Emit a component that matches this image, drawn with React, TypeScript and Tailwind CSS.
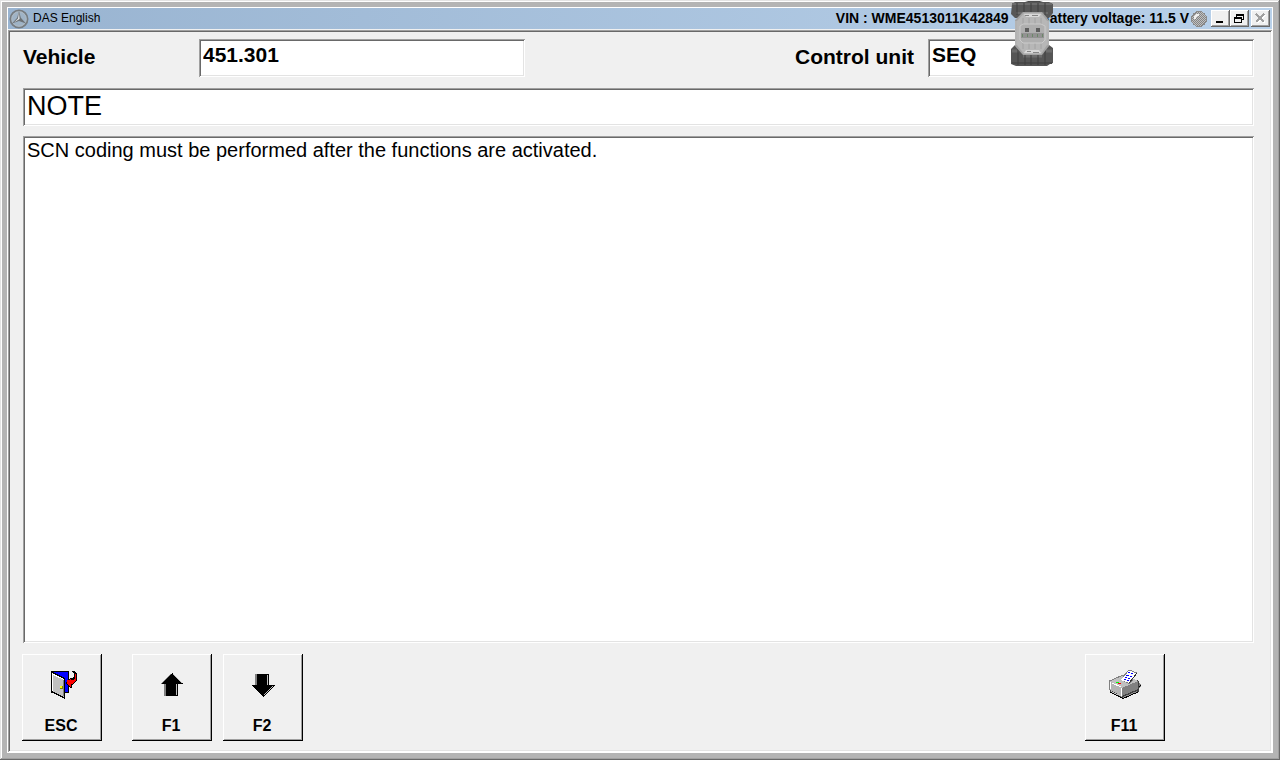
import type { ReactNode } from "react";

const SUNKEN =
  "bg-white shadow-[inset_1px_1px_0_#a0a0a0,inset_-1px_-1px_0_#fff,inset_2px_2px_0_#696969,inset_-2px_-2px_0_#e3e3e3]";
const FIELD = `${SUNKEN} h-[38px] min-w-0 px-1 text-black outline-none`;

function StarIcon() {
  return (
    <svg width="20" height="20" viewBox="0 0 20 20" aria-hidden="true">
      <circle cx="10" cy="10" r="8.6" fill="#9fb3c6" stroke="#777c80" strokeWidth="1.8" />
      <circle cx="10" cy="10" r="7.2" fill="none" stroke="#b4bbc1" strokeWidth="0.8" />
      <path d="M10 2 L11.8 8.8 L17 14.5 L10 12 L3 14.5 L8.2 8.8 Z" fill="#6c7175" />
      <path d="M10 3 L10.6 10 L5 13.4 L9 9.4 Z" fill="#e0e3e5" />
    </svg>
  );
}

function StatusBall() {
  return (
    <svg width="16" height="16" viewBox="0 0 16 16" shapeRendering="crispEdges" aria-hidden="true">
      <defs>
        <pattern id="dither" width="2" height="2" patternUnits="userSpaceOnUse">
          <rect width="2" height="2" fill="#c0c0c0" />
          <rect width="1" height="1" fill="#848484" />
          <rect x="1" y="1" width="1" height="1" fill="#848484" />
        </pattern>
      </defs>
      <circle cx="8" cy="8" r="7.5" fill="url(#dither)" stroke="#8a8a8a" strokeWidth="1" />
      <path d="M3 8 V5 L5 3 H8 V5 H6 V6 H5 V8 Z" fill="#f0f0f0" />
    </svg>
  );
}

function Interface() {
  return (
    <svg width="42" height="66" viewBox="0 0 42 66" aria-hidden="true">
      <path d="M1 4 L4 2 H14 L17 1 H29 L32 2 H38 L42 4 V13 L38 18 H4 L0 14 Z" fill="#575757" />
      <path d="M1 4 H41 M5 13 H37" stroke="#6b6b6b" strokeWidth="2" />
      <path d="M17 1.5 H29" stroke="#4a4a4a" />
      <path d="M6 3 V15 M13 3 V13 M20 3 V12 M27 3 V12 M34 3 V15" stroke="#3f3f3f" />
      <path d="M0 49 L4 45 H38 L42 48 V63 L39 64 L36 66 H5 L0 64 Z" fill="#565656" />
      <path d="M1 51 H8 M35 51 H41 M12 56 H31" stroke="#6c6c6c" strokeWidth="3" />
      <path d="M1 63 H41" stroke="#4a4a4a" strokeWidth="2" />
      <path d="M7 49 V65 M14 55 V65 M20 55 V65 M27 55 V65 M34 50 V65" stroke="#3e3e3e" />
      <path d="M12 12 H31 L38 20 V46 L31 55 H12 L4 46 V20 Z" fill="#a3a3a3" />
      <path d="M13 13 H30 L36 21 V45 L30 54 H13 L6 45 V21 Z" fill="#b7b7b7" />
      <path d="M5 21 V45 M37 21 V45" stroke="#c4c4c4" />
      <path d="M13 14 H30 L28 17 H15 Z M15 50 H28 L30 53 H13 Z" fill="#d8d8d8" />
      <path d="M14 15.5 H18 M21 15.5 H27 M16 51.5 H20 M22 52.5 H28" stroke="#858585" />
      <path d="M12 18 V25 M18 18 V25 M24 18 V25 M30 18 V25 M12 43 V49 M18 43 V49 M24 43 V49 M30 43 V49" stroke="#a2a2a2" />
      <path d="M9 26 L12 24 H30 L34 26 V40 L31 43 H12 L9 40 Z" fill="#afafaf" stroke="#cbcbcb" />
      <rect x="14" y="28" width="4" height="4" fill="#5e5e5e" />
      <rect x="25" y="28" width="4" height="4" fill="#5e5e5e" />
      <rect x="10" y="33" width="23" height="5" fill="#929292" />
      <path d="M11.5 34 V37 M16.5 34 V37 M21.5 34 V37 M26.5 34 V37 M31.5 34 V37" stroke="#6b8768" />
    </svg>
  );
}

function DoorIcon() {
  return (
    <svg width="32" height="32" viewBox="0 0 32 32" shapeRendering="crispEdges" aria-hidden="true">
      <rect x="5" y="2" width="18" height="22" fill="#000" />
      <rect x="6" y="3" width="16" height="20" fill="#00f" />
      <path d="M5 2 L19 9 V30 L5 23 Z" fill="#000" />
      <path d="M6 4 L18 10 V28 L6 22 Z" fill="#c0c0c0" />
      <path d="M6 4 L18 10 V11 L7 6 V22 H6 Z" fill="#fff" />
      <path d="M17 11 H18 V28 L17 27 Z" fill="#808080" />
      <rect x="14" y="17" width="3" height="3" fill="#808000" />
      <rect x="14" y="17" width="2" height="2" fill="#ff0" />
      <path d="M26 2 H28 L31 5 V11 L28 15 L26 16 V19 H24 L19 14 L24 9 H26 L28 8 V5 Z" fill="#000" />
      <path d="M29 5 H30 V11 L27 15 H25 V18 H24 L20 14 L24 10 H25 V11 H27 L29 9 Z" fill="#f00" />
      <rect x="21" y="11" width="6" height="4" fill="#f00" />
      <rect x="23" y="15" width="2" height="2" fill="#f00" />
    </svg>
  );
}

function UpIcon() {
  return (
    <svg width="32" height="32" viewBox="0 0 32 32" shapeRendering="crispEdges" aria-hidden="true">
      <path d="M15 4 L4 15 H8 V27 H10 V15 H14 Z" fill="#808080" />
      <path d="M16 4 L28 15 H22 V27 H10 V15 H5 Z" fill="#000" />
      <path d="M17 5 L26 14 M20.5 15 V26" stroke="#c0c0c0" fill="none" />
    </svg>
  );
}

function DownIcon() {
  return (
    <svg width="32" height="32" viewBox="0 0 32 32" shapeRendering="crispEdges" aria-hidden="true">
      <path d="M8 5 H11 V17 L16 28 L4 16 H8 Z" fill="#808080" />
      <path d="M10 5 H22 V16 H28 L16 28 L5 16 H10 Z" fill="#000" />
      <path d="M20.5 6 V16 M26 17 L17 26" stroke="#c0c0c0" fill="none" />
    </svg>
  );
}

function PrinterIcon() {
  return (
    <svg width="32" height="32" viewBox="0 0 32 32" shapeRendering="crispEdges" aria-hidden="true">
      <path d="M28 12 L32 15 V17 L28 21 Z" fill="#808080" />
      <path d="M32 16 L28 20" stroke="#000" fill="none" />
      <path d="M0 12 L13 6 H16 L30 12 V23 L14 30 L1 23 Z" fill="#404040" />
      <path d="M1 23 L14 29.5 L29 23" stroke="#000" fill="none" />
      <path d="M0 12 L13 6 H16 L29 12 L13 19 Z" fill="#c0c0c0" />
      <path d="M0.5 12 L13 6.5 H17" stroke="#808080" fill="none" />
      <path d="M0 12 L13 18 V27 L1 21 Z" fill="#b4b4b4" />
      <path d="M2 22 L13 27 V28 L2 23 Z" fill="#c0c0c0" />
      <path d="M13 19 L29 12 V20 L13 27 Z" fill="#808080" />
      <path d="M14 28 L28 22 V23 L14 29 Z" fill="#909090" />
      <path d="M1.5 13 V20 M3 14 L12 18 M12.5 19 V27" stroke="#fff" fill="none" />
      <path d="M0.5 12 V21" stroke="#808080" fill="none" />
      <path d="M12 11 L17 8 L25 11 L20 15 Z" fill="#808080" />
      <path d="M12 11 L20 1 L28 4 L20 14 Z" fill="#fff" />
      <path d="M14 8 L20 1 L28 4" stroke="#808080" fill="none" />
      <path d="M28 4 L20 14" stroke="#303030" fill="none" />
      <path
        d="M19 3.5 H21 M22 4.5 H24 M17 6.5 H20 M21 7.5 H23 M16 8.5 H18 M19 9.5 H21 M15 10.5 H17 M18 11.5 H20"
        stroke="#00f"
      />
      <rect x="7" y="13" width="3" height="1" fill="#0f0" />
      <rect x="9" y="14" width="3" height="1" fill="#f00" />
    </svg>
  );
}

function CaptionButton({ label, children }: { label: string; children: ReactNode }) {
  return (
    <button
      type="button"
      aria-label={label}
      className="h-[17px] w-[19px] bg-[#f0f0f0] shadow-[inset_-1px_-1px_0_#696969,inset_1px_1px_0_#fff,inset_-2px_-2px_0_#a0a0a0]"
    >
      <svg width="19" height="17" viewBox="0 0 19 17" shapeRendering="crispEdges" aria-hidden="true">
        {children}
      </svg>
    </button>
  );
}

function KeyButton({ label, icon }: { label: string; icon: ReactNode }) {
  return (
    <button
      type="button"
      className="flex h-[87px] w-20 flex-col items-center bg-[#f0f0f0] pt-[15px] text-[16px] leading-5 font-bold shadow-[inset_-1px_-1px_0_#000,inset_1px_1px_0_#fff,inset_-2px_-2px_0_#a0a0a0]"
    >
      {icon}
      <span className="mt-[15px] pr-0.5">{label}</span>
    </button>
  );
}

export default function App() {
  return (
    <div className="relative flex min-h-screen flex-col bg-[#b4b4b4] p-[7px] font-['Liberation_Sans',Arial,sans-serif] text-black shadow-[inset_-1px_-1px_0_#696969,inset_1px_1px_0_#e3e3e3,inset_-2px_-2px_0_#a0a0a0,inset_2px_2px_0_#fff]">
      <div className="flex flex-1 flex-col border border-white bg-[#f0f0f0]">
        <header className="flex h-[21px] items-center bg-linear-to-r from-[#99b4d1] to-[#b9d1ea] pr-0.5 pl-px">
          <StarIcon />
          <h1 className="ml-1 pb-px text-[12px] leading-4">DAS English</h1>
          <div className="ml-auto flex gap-[31px] pb-0.5 text-[14px] leading-4 font-bold">
            <span>VIN : WME4513011K42849</span>
            <span>Battery voltage: 11.5 V</span>
          </div>
          <span className="ml-0.5">
            <StatusBall />
          </span>
          <div className="ml-1 flex">
            <CaptionButton label="Minimize">
              <rect x="5" y="11" width="7" height="2" fill="#000" />
            </CaptionButton>
            <CaptionButton label="Restore">
              <path d="M6 4 H14 V10 H12 V9 H13 V6 H7 V7 H6 Z" fill="#000" />
              <path d="M4 7 H12 V13 H4 Z M5 9 V12 H11 V9 Z" fillRule="evenodd" fill="#000" />
            </CaptionButton>
          </div>
          <div className="ml-0.5 flex">
            <CaptionButton label="Close">
              <path d="M6 5 L14 13 M14 5 L6 13" stroke="#fff" strokeWidth="2" />
              <path d="M5 4 L13 12 M13 4 L5 12" stroke="#a0a0a0" strokeWidth="2" />
            </CaptionButton>
          </div>
        </header>

        <main className="mt-px flex flex-1 flex-col pt-[9px] pr-[18px] pb-[11px] pl-[15px] shadow-[inset_1px_1px_0_#a0a0a0,inset_-1px_-1px_0_#fff,inset_2px_2px_0_#696969,inset_-2px_-2px_0_#e3e3e3]">
          <div className="flex items-center text-[21px] font-bold">
            <label htmlFor="vehicle" className="w-44 shrink-0 pb-0.5">
              Vehicle
            </label>
            <input id="vehicle" readOnly value="451.301" className={`${FIELD} w-[326px] pb-1.5`} />
            <label htmlFor="unit" className="ml-auto shrink-0 pr-[14px] pb-0.5">
              Control unit
            </label>
            <input id="unit" readOnly value="SEQ" className={`${FIELD} w-[326px] pb-1.5`} />
          </div>
          <input
            aria-label="Message type"
            readOnly
            value="NOTE"
            className={`${FIELD} mt-[11px] w-full pb-0.5 text-[27px]`}
          />
          <textarea
            aria-label="Message"
            readOnly
            value="SCN coding must be performed after the functions are activated."
            className={`${SUNKEN} mt-[10px] w-full flex-1 resize-none px-1 py-0.5 text-[20px] leading-6 outline-none`}
          />
          <div className="mt-[11px] -ml-px flex">
            <KeyButton label="ESC" icon={<DoorIcon />} />
            <div className="ml-[30px] flex gap-[11px]">
              <KeyButton label="F1" icon={<UpIcon />} />
              <KeyButton label="F2" icon={<DownIcon />} />
            </div>
            <div className="mr-[89px] ml-auto">
              <KeyButton label="F11" icon={<PrinterIcon />} />
            </div>
          </div>
        </main>
      </div>
      <div className="absolute top-0 right-[227px]">
        <Interface />
      </div>
    </div>
  );
}
